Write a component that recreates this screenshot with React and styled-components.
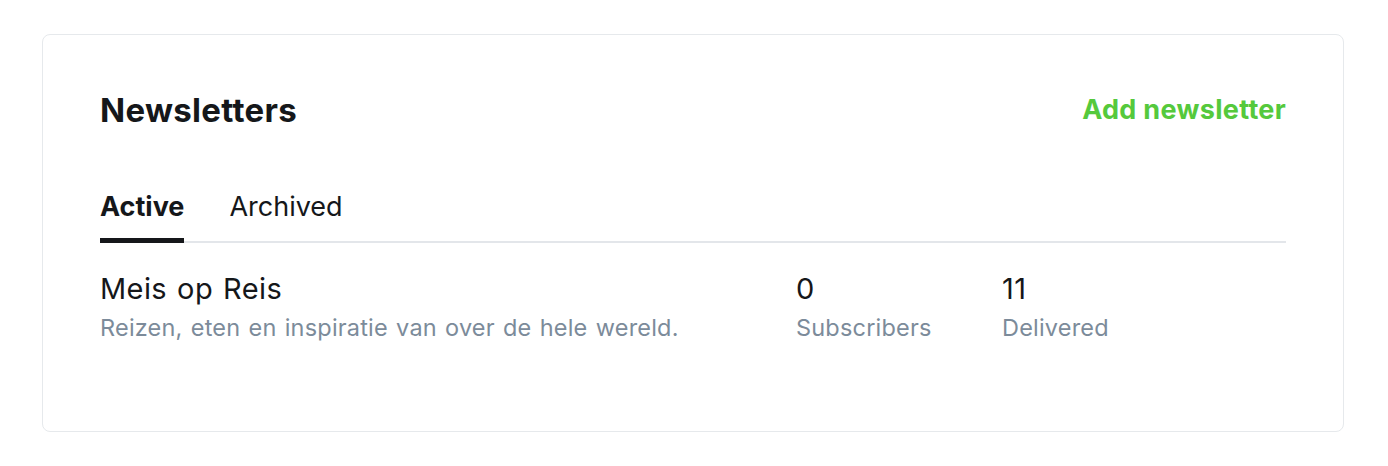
import React, { useState } from "react";
import styled, { createGlobalStyle } from "styled-components";

const GlobalStyle = createGlobalStyle`
  html, body {
    margin: 0;
    padding: 0;
    background: #ffffff;
  }
  body {
    font-family: Inter, "Noto Sans", sans-serif;
    color: #15171a;
    -webkit-font-smoothing: antialiased;
  }
`;

const Page = styled.div`
  padding: 34px 44px 34px 42px;
`;

const Card = styled.section`
  box-sizing: border-box;
  width: 1302px;
  height: 398px;
  border: 1px solid #e6e9ec;
  border-radius: 8px;
  padding: 57px 57px 0;
  background: #fff;
`;

const Header = styled.div`
  display: flex;
  align-items: center;
  justify-content: space-between;
  height: 36px;
`;

const Title = styled.h2`
  margin: 0;
  font-size: 33px;
  line-height: 36px;
  font-weight: 700;
  letter-spacing: 0.3px;
  color: #15171a;
`;

const AddButton = styled.button`
  border: 0;
  background: none;
  padding: 0;
  font-family: inherit;
  font-size: 27px;
  line-height: 36px;
  font-weight: 700;
  letter-spacing: 0.3px;
  color: #55c93c;
  cursor: pointer;
`;

const Tabs = styled.div`
  display: flex;
  gap: 45px;
  margin-top: 62px;
  border-bottom: 2px solid #e3e6ea;
`;

const Tab = styled.button`
  border: 0;
  background: none;
  padding: 0 0 15px;
  margin-bottom: -2px;
  font-family: inherit;
  font-size: 27px;
  line-height: 33px;
  font-weight: ${(p) => (p.$active ? 700 : 400)};
  color: #15171a;
  cursor: pointer;
  border-bottom: 5px solid ${(p) => (p.$active ? "#15171a" : "transparent")};
`;

const Row = styled.div`
  display: grid;
  grid-template-columns: 696px 206px 1fr;
  padding-top: 28px;
`;

const Cell = styled.div`
  display: flex;
  flex-direction: column;
  gap: 7px;
`;

const Primary = styled.div`
  font-size: 29px;
  font-weight: 400;
  line-height: 36px;
  letter-spacing: 0.4px;
  word-spacing: 1.5px;
  color: #15171a;
`;

const Secondary = styled.div`
  font-size: 23.5px;
  line-height: 28px;
  color: #7c8b9a;
  letter-spacing: 0.2px;
  word-spacing: 1.4px;
`;

export default function App() {
  const [tab, setTab] = useState("active");
  return (
    <>
      <GlobalStyle />
      <Page>
        <Card>
          <Header>
            <Title>Newsletters</Title>
            <AddButton>Add newsletter</AddButton>
          </Header>
          <Tabs>
            <Tab $active={tab === "active"} onClick={() => setTab("active")}>
              Active
            </Tab>
            <Tab $active={tab === "archived"} onClick={() => setTab("archived")}>
              Archived
            </Tab>
          </Tabs>
          <Row>
            <Cell>
              <Primary>Meis op Reis</Primary>
              <Secondary>Reizen, eten en inspiratie van over de hele wereld.</Secondary>
            </Cell>
            <Cell>
              <Primary>0</Primary>
              <Secondary>Subscribers</Secondary>
            </Cell>
            <Cell>
              <Primary>11</Primary>
              <Secondary>Delivered</Secondary>
            </Cell>
          </Row>
        </Card>
      </Page>
    </>
  );
}
